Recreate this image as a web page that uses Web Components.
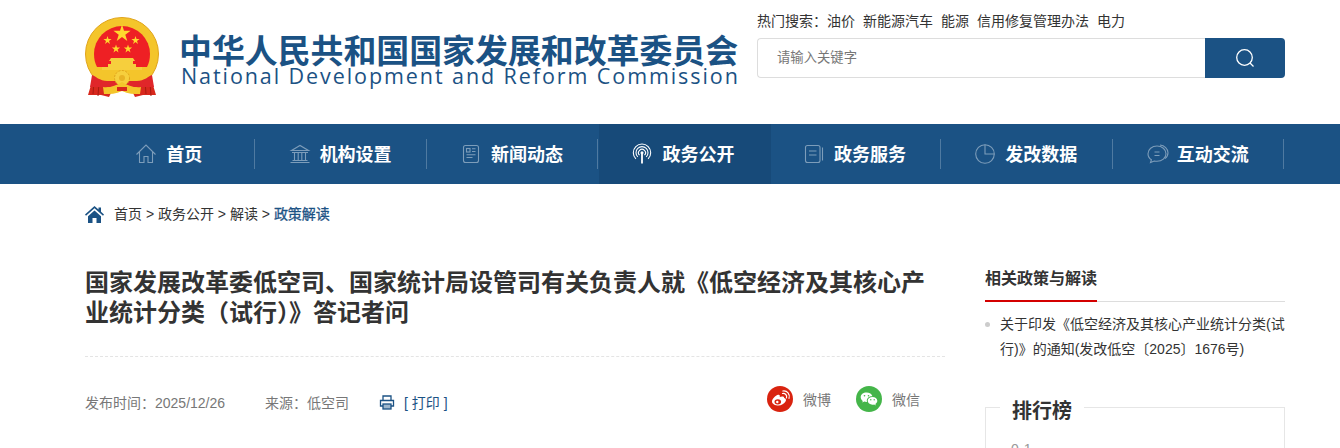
<!DOCTYPE html>
<html lang="zh-CN">
<head>
<meta charset="utf-8">
<title>国家发展和改革委员会</title>
<style>
    html, body { margin: 0; height: 448px; overflow: hidden; background: #fff; }
    body { font-family: "Liberation Sans", "Noto Sans CJK SC", sans-serif; color: #333; }
</style>
</head>
<body>
<site-header></site-header>
<main-nav>
    <nav-item label="首页" icon="home"></nav-item>
    <nav-item label="机构设置" icon="bank"></nav-item>
    <nav-item label="新闻动态" icon="news"></nav-item>
    <nav-item label="政务公开" icon="signal" active></nav-item>
    <nav-item label="政务服务" icon="book"></nav-item>
    <nav-item label="发改数据" icon="pie"></nav-item>
    <nav-item label="互动交流" icon="chat"></nav-item>
</main-nav>
<bread-crumb></bread-crumb>
<page-body>
    <article-head slot="main"></article-head>
    <side-panel slot="side"></side-panel>
</page-body>

<script>
const NAV_ICONS = {
    home: '<path d="M.5 10.500 10 1l9.500 9.500M3.500 8V18.500h4.500v-6h4v6h4.500V8"/>',
    bank: '<path d="M1.500 6.500 10 1.500l8.500 5zM2 8.500h16M4.500 9v7M8.200 9v7M11.800 9v7M15.500 9v7M2.500 16.500h15M.5 18.500h19"/>',
    news: '<rect x="2.500" y="1.500" width="15" height="17" rx="2"/><rect x="5.500" y="4.500" width="3.500" height="3.500"/><path d="M11 4.800h3.500M11 7.500h3.500M5.500 10.800h9M5.500 13.500h6"/>',
    signal: '<path d="M10 9v10.500" stroke-width="1.800"/><circle cx="10" cy="8.700" r="1.500" fill="#fff" stroke="none"/><path d="M7.500 11.200A3.500 3.500 0 1 1 12.500 11.200M5.800 12.900A6 6 0 1 1 14.200 12.900M3.900 14.900A8.700 8.700 0 1 1 16.100 14.900"/>',
    book: '<rect x="1.500" y="1.500" width="14.500" height="17" rx="2"/><path d="M5 7h7.500M5 11h7.500M18.500 3.500v13"/>',
    pie: '<circle cx="10" cy="10" r="9.300"/><path d="M10 .7v9.300h9.300"/>',
    chat: '<path d="M10 2c-5 0-9 3.400-9 7.700 0 2.500 1.300 4.600 3.400 6l-.9 2.800 3.700-1.500c.9.200 1.800.300 2.800.300 5 0 9-3.300 9-7.600S15 2 10 2z"/><path d="M7.500 8h5M7.500 11.500h5M13 1c4.500.5 8 3.700 8 7.800 0 2.500-1.300 4.500-3 5.800"/>'
};

class SiteLogo extends HTMLElement {
    connectedCallback() {
        this.attachShadow({ mode: 'open' });
        this.shadowRoot.innerHTML = `
            <style>
                :host { display: flex; align-items: flex-start; }
                svg { display: block; flex: none; margin-top: 17px; }
                .words { margin: 32px 0 0 20px; color: #1b5284; white-space: nowrap; }
                .cn { font: 700 32.900px/34px "Noto Sans CJK SC", sans-serif; }
                .en { font: 400 21.500px/20px "Open Sans", sans-serif; letter-spacing: 1.920px; margin-left: 2px; }
            </style>
            <svg width="74" height="80" viewBox="0 0 74 80">
                <path d="M9 58 3 78h13l8 2 4-8-7-14zM65 58l6 20H58l-8 2-4-8 7-14z" fill="#d8281d"/>
                <path d="M9 64l-1 13M14 66l-1 13M61 77l-1-13M66 79l-1-13" stroke="#a81a12" stroke-width="1"/>
                <circle cx="37" cy="37" r="36.500" fill="#f4c52b" stroke="#e0a41c" stroke-width="1"/>
                <path d="M9 37a28 28 0 0 1 56 0c0 5-1 9-3 13H12C10 46 9 42 9 37z" fill="#ee2024"/>
                <polygon points="37,7.500 39,13.800 45.600,13.800 40.300,17.700 42.300,24 37,20.100 31.700,24 33.700,17.700 28.400,13.800 35,13.800" fill="#ffd92e"/>
                <polygon points="22.500,19 23.500,22 26.600,22 24,23.900 25,26.900 22.500,25 20,26.900 21,23.900 18.400,22 21.500,22" fill="#ffd92e"/>
                <polygon points="50.500,19 51.500,22 54.600,22 52,23.900 53,26.900 50.500,25 48,26.900 49,23.900 46.400,22 49.500,22" fill="#ffd92e"/>
                <polygon points="31,27.500 32,30.500 35.100,30.500 32.600,32.400 33.500,35.400 31,33.500 28.500,35.400 29.400,32.400 26.900,30.500 30,30.500" fill="#ffd92e"/>
                <polygon points="43,27.500 44,30.500 47.100,30.500 44.600,32.400 45.500,35.400 43,33.500 40.500,35.400 41.400,32.400 38.900,30.500 42,30.500" fill="#ffd92e"/>
                <path d="M26 41h22l2 3h-2v3h3v3h6v3H17v-3h6v-3h3v-3h-2z" fill="#f6cf3d"/>
                <path d="M12 53h50l-2 4H14z" fill="#f4c52b"/>
                <path d="M7 58c3 1 8 6 15 6h30c7 0 12-5 15-6l2 12H5z" fill="#e0262a"/>
                <circle cx="37" cy="61" r="7.500" fill="#f6cf3d" stroke="#e0a41c" stroke-width="1" stroke-dasharray="2 1.500"/>
                <circle cx="37" cy="61" r="3" fill="#e8b325"/>
                <path d="M18 70c6 1 13-1 19-5 6 4 13 6 19 5l-1 7c-6 0-12 0-18-3-6 3-12 3-18 3z" fill="#f4c52b"/>
                <path d="M32 70h10v4H32z" fill="#d8281d"/>
            </svg>
            <div class="words">
                <div class="cn">中华人民共和国国家发展和改革委员会</div>
                <div class="en">National Development and Reform Commission</div>
            </div>
        `;
    }
}

class SearchBox extends HTMLElement {
    connectedCallback() {
        this.attachShadow({ mode: 'open' });
        this.shadowRoot.innerHTML = `
            <style>
                :host { display: block; width: 528px; padding-top: 13px; }
                .hot { display: flex; gap: 8px; font-size: 14px; line-height: 16px; color: #333; white-space: nowrap; }
                .hot .lead { margin-right: -8px; }
                .bar { display: flex; height: 40px; margin-top: 9px; }
                .field { flex: 1; box-sizing: border-box; border: 1px solid #ddd; border-right: 0; border-radius: 4px 0 0 4px;
                    padding-left: 19px; font-size: 13.330px; line-height: 38px; color: #777; }
                .btn { width: 80px; background: #1b5284; border-radius: 0 4px 4px 0; display: flex; align-items: center; justify-content: center; }
            </style>
            <div class="hot">
                <span class="lead">热门搜索：</span><span>油价</span><span>新能源汽车</span><span>能源</span><span>信用修复管理办法</span><span>电力</span>
            </div>
            <div class="bar">
                <div class="field">请输入关键字</div>
                <div class="btn">
                    <svg width="20" height="20" viewBox="0 0 20 20" fill="none" stroke="#fff" stroke-width="1.300">
                        <circle cx="9.500" cy="9.500" r="7.800"/><path d="M15 15l3.500 3.500"/>
                    </svg>
                </div>
            </div>
        `;
    }
}

class SiteHeader extends HTMLElement {
    connectedCallback() {
        this.attachShadow({ mode: 'open' });
        this.shadowRoot.innerHTML = `
            <style>
                :host { display: block; height: 124px; }
                .wrap { width: 1200px; margin-left: 85px; display: flex; justify-content: space-between; }
            </style>
            <div class="wrap"><site-logo></site-logo><search-box></search-box></div>
        `;
    }
}

class MainNav extends HTMLElement {
    connectedCallback() {
        this.attachShadow({ mode: 'open' });
        this.shadowRoot.innerHTML = `
            <style>
                :host { display: block; height: 60px; background: #1b5284; }
                .wrap { width: 1200px; height: 100%; margin-left: 85px; display: grid; grid-template-columns: repeat(7, 1fr); }
            </style>
            <div class="wrap"><slot></slot></div>
        `;
    }
}

class NavItem extends HTMLElement {
    connectedCallback() {
        const active = this.hasAttribute('active');
        this.attachShadow({ mode: 'open' });
        this.shadowRoot.innerHTML = `
            <style>
                :host { display: flex; position: relative; box-sizing: border-box; align-items: center; justify-content: center; gap: 10px; height: 60px;
                    padding-right: 3px; font: 700 18px/24px "Noto Sans CJK SC", sans-serif; color: #fff; }
                :host([active]) { background: #174a79; }
                :host::after { content: ""; position: absolute; right: 1px; top: 15px; height: 30px; width: 1px; background: #4f7aa1; }
                :host([active])::after { display: none; }
                svg { display: block; overflow: visible; }
                span { margin-top: -2px; }
            </style>
            <svg width="20" height="20" viewBox="0 0 20 20" fill="none" stroke="${active ? '#fff' : '#7d9dba'}" stroke-width="1.100">${NAV_ICONS[this.getAttribute('icon')]}</svg>
            <span>${this.getAttribute('label')}</span>
        `;
    }
}

class BreadCrumb extends HTMLElement {
    connectedCallback() {
        this.attachShadow({ mode: 'open' });
        this.shadowRoot.innerHTML = `
            <style>
                :host { display: block; padding-top: 21px; }
                .wrap { width: 1200px; margin-left: 85px; display: flex; align-items: center; height: 18px; font-size: 14px; line-height: 18px; color: #333; white-space: pre; }
                svg { display: block; margin-right: 10px; }
                b { font-weight: 400; color: #1b5284; -webkit-text-stroke: .3px #1b5284; }
            </style>
            <div class="wrap">
                <svg width="19" height="17" viewBox="0 0 19 17" fill="#1b5284">
                    <path d="M9.500 0 0 8.500l1 1.200L9.500 2.200 18 9.700l1-1.200-3-2.700V1.500h-2.500v2.100z"/>
                    <path d="M3 10.200 9.500 4.500l6.500 5.700V17h-4.500v-5h-4v5H3z"/>
                </svg>
                <span>首页 &gt; 政务公开 &gt; 解读 &gt; <b>政策解读</b></span>
            </div>
        `;
    }
}

class PageBody extends HTMLElement {
    connectedCallback() {
        this.attachShadow({ mode: 'open' });
        this.shadowRoot.innerHTML = `
            <style>
                :host { display: block; padding-top: 43px; }
                .wrap { width: 1200px; margin-left: 85px; display: flex; justify-content: space-between; align-items: flex-start; }
                .main { display: block; width: 860px; }
                .side { display: block; width: 300px; }
            </style>
            <div class="wrap">
                <div class="main"><slot name="main"></slot></div>
                <div class="side"><slot name="side"></slot></div>
            </div>
        `;
    }
}

class ArticleHead extends HTMLElement {
    connectedCallback() {
        this.attachShadow({ mode: 'open' });
        this.shadowRoot.innerHTML = `
            <style>
                :host { display: block; }
                h1 { margin: 0; padding: 0 0 30px; font: 700 24px/30px "Noto Sans CJK SC", sans-serif; color: #333; border-bottom: 1px dashed #e4e4e4; }
                .meta { display: flex; align-items: center; height: 36px; margin-top: 27px; font-size: 14px; color: #777; white-space: nowrap; }
                .src { margin-left: 40px; }
                .print { display: flex; align-items: center; gap: 9px; margin-left: 30px; color: #1b5284; }
                .share { display: flex; align-items: center; margin: -6px 0 0 auto; padding-right: 25px; gap: 25px; }
                .share span { display: flex; align-items: center; gap: 10px; }
                svg { display: block; }
            </style>
            <h1>国家发展改革委低空司、国家统计局设管司有关负责人就《低空经济及其核心产业统计分类（试行）》答记者问</h1>
            <div class="meta">
                <span>发布时间：2025/12/26</span>
                <span class="src">来源：低空司</span>
                <span class="print">
                    <svg width="16" height="15" viewBox="0 0 16 15" fill="none" stroke="#1b5284" stroke-width="1.300">
                        <path d="M4 5V1h8v4M4 11H1.500V5.500h13V11H12"/><rect x="4" y="9" width="8" height="5" fill="#9db6cc"/>
                    </svg>
                    [ 打印 ]
                </span>
                <div class="share">
                    <span>
                        <svg width="26" height="26" viewBox="0 0 26 26">
                            <circle cx="13" cy="13" r="13" fill="#d9230f"/>
                            <path d="M11.500 19.500c-3.300 0-6.500-1.500-6.500-4 0-2.500 3.400-6.200 6.200-6.800 1.500-.3 2 .8 1.500 2.300 2-.8 4.500-.7 4.400 1 2 .6 2.300 2 1.400 3.500-1.100 2.300-4.300 4-7 4z" fill="#fff"/>
                            <ellipse cx="10.800" cy="15.800" rx="3.300" ry="2.600" fill="#d9230f"/>
                            <circle cx="10.300" cy="16" r="1.200" fill="#fff"/>
                            <path d="M15.500 7.500c2.700-.5 4.800 1.700 4 4.400M15.800 5c4.500-.7 7.500 3 6.200 7.300" fill="none" stroke="#fff" stroke-width="1.200" stroke-linecap="round"/>
                        </svg>
                        微博
                    </span>
                    <span>
                        <svg width="26" height="26" viewBox="0 0 26 26">
                            <circle cx="13" cy="13" r="13" fill="#44b549"/>
                            <path d="M10.500 6.500c-3.300 0-5.800 2-5.800 4.700 0 1.500.8 2.800 2.100 3.700l-.5 1.700 2-1c.7.200 1.400.3 2.200.3h.5c-.1-.4-.2-.8-.2-1.200 0-2.500 2.300-4.400 5.200-4.400h.4c-.5-2.200-2.900-3.800-5.900-3.800z" fill="#fff"/>
                            <path d="M21.300 14.800c0-2.200-2.200-3.900-4.800-3.900s-4.800 1.700-4.800 3.900 2.200 3.900 4.800 3.900c.6 0 1.200-.1 1.700-.2l1.600.9-.4-1.500c1.200-.8 1.900-1.900 1.900-3.100z" fill="#fff"/>
                            <circle cx="8.500" cy="9.700" r=".8" fill="#44b549"/><circle cx="12.500" cy="9.700" r=".8" fill="#44b549"/>
                            <circle cx="14.800" cy="13.700" r=".7" fill="#44b549"/><circle cx="18.200" cy="13.700" r=".7" fill="#44b549"/>
                        </svg>
                        微信
                    </span>
                </div>
            </div>
        `;
    }
}

class SidePanel extends HTMLElement {
    connectedCallback() {
        this.attachShadow({ mode: 'open' });
        this.shadowRoot.innerHTML = `
            <style>
                :host { display: block; }
                .head { border-bottom: 1px solid #ddd; height: 35px; }
                .head h3 { display: inline-block; margin: 0; box-sizing: border-box; height: 36px; border-bottom: 2px solid #d40000;
                    font: 700 16px/22px "Noto Sans CJK SC", sans-serif; color: #333; }
                ul { list-style: none; margin: 10px 0 0; padding: 0; }
                li { position: relative; padding-left: 15px; font-size: 14px; line-height: 25px; color: #333; }
                li::before { content: ""; position: absolute; left: 0; top: 10px; width: 5px; height: 5px; border-radius: 50%; background: #ccc; }
                fieldset { margin: 30px 0 0; padding: 0 0 0 25px; border: 1px solid #e6e6e6; height: 120px; box-sizing: border-box; }
                legend { margin-left: -11px; padding: 6px 12px 0; font: 700 20px/24px "Noto Sans CJK SC", sans-serif; color: #333; }
                .num { margin-top: 18px; font-size: 14px; color: #999; letter-spacing: 5px; line-height: 18px; }
            </style>
            <div class="head"><h3>相关政策与解读</h3></div>
            <ul><li>关于印发《低空经济及其核心产业统计分类(试行)》的通知(发改低空〔2025〕1676号)</li></ul>
            <fieldset><legend>排行榜</legend><div class="num">01</div></fieldset>
        `;
    }
}

customElements.define('site-logo', SiteLogo);
customElements.define('search-box', SearchBox);
customElements.define('site-header', SiteHeader);
customElements.define('main-nav', MainNav);
customElements.define('nav-item', NavItem);
customElements.define('bread-crumb', BreadCrumb);
customElements.define('page-body', PageBody);
customElements.define('article-head', ArticleHead);
customElements.define('side-panel', SidePanel);
</script>
</body>
</html>
